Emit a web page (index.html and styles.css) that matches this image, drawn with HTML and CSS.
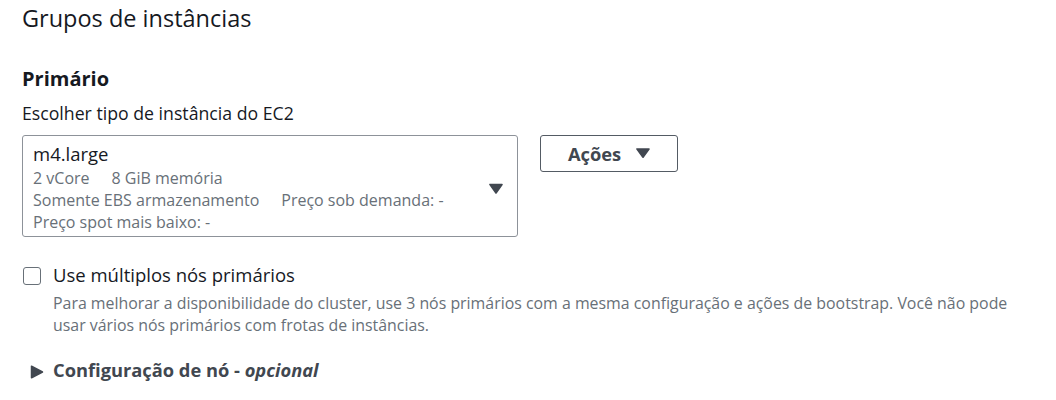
FILE: index.html
```html
<!DOCTYPE html>
<html lang="pt">
<head>
<meta charset="utf-8">
<link rel="stylesheet" href="styles.css">
</head>
<body>
<div class="page">
  <h2 class="title">Grupos de instâncias</h2>
  <h3 class="section">Primário</h3>
  <div class="field-label">Escolher tipo de instância do EC2</div>
  <div class="row">
    <div class="select">
      <div class="select-body">
        <div class="opt-name">m4.large</div>
        <div class="opt-line"><span>2 vCore</span><span>8 GiB memória</span></div>
        <div class="opt-line"><span>Somente EBS armazenamento</span><span>Preço sob demanda: -</span></div>
        <div class="opt-line"><span>Preço spot mais baixo: -</span></div>
      </div>
      <svg class="caret" width="14" height="11" viewBox="0 0 14 11"><path d="M1 1.5h12L7 10z" fill="#414750" stroke="#414750" stroke-width="1.6" stroke-linejoin="round"/></svg>
    </div>
    <button class="btn"><span>Ações</span><svg width="14" height="10" viewBox="0 0 14 10"><path d="M1 1h12L7 9.2z" fill="#414750" stroke="#414750" stroke-width="1.6" stroke-linejoin="round"/></svg></button>
  </div>
  <div class="check">
    <span class="box"></span>
    <div class="check-text">
      <div class="check-label">Use múltiplos nós primários</div>
      <div class="check-desc">Para melhorar a disponibilidade do cluster, use 3 nós primários com a mesma configuração e ações de bootstrap. Você não pode usar vários nós primários com frotas de instâncias.</div>
    </div>
  </div>
  <div class="expander">
    <svg class="exp-icon" width="14" height="14" viewBox="0 0 14 14"><path d="M1.5 1.2v11.6L12.5 7z" fill="#414750" stroke="#414750" stroke-width="1.5" stroke-linejoin="round"/></svg>
    <span class="exp-label">Configuração de nó - <i>opcional</i></span>
  </div>
</div>
</body>
</html>
```
FILE: styles.css
```css
* { box-sizing: border-box; }
body {
  margin: 0;
  background: #fff;
  font-family: "Open Sans", "Noto Sans", sans-serif;
  color: #16191f;
}
.page {
  padding: 0 22px;
  width: 1056px;
}
.title {
  margin: 0;
  padding-top: 2px;
  font-size: 23.5px;
  font-weight: 400;
  line-height: 32px;
}
.section {
  margin: 31px 0 0;
  font-size: 20px;
  font-weight: 700;
  line-height: 28px;
}
.field-label {
  margin-top: 8px;
  font-size: 17.7px;
  line-height: 24px;
}
.row {
  display: flex;
  align-items: flex-start;
  gap: 22px;
  margin-top: 10px;
}
.select {
  width: 496px;
  height: 102px;
  border: 1px solid #8d9299;
  border-radius: 3px;
  display: flex;
  align-items: center;
  padding: 4px 14px 0 10px;
}
.select-body {
  flex: 1;
  align-self: flex-start;
}
.opt-name {
  font-size: 18.5px;
  line-height: 27px;
}
.opt-line {
  font-size: 16px;
  line-height: 22px;
  color: #687078;
  display: flex;
  gap: 22px;
}
.caret { flex: none; margin-top: 1px; }
.btn {
  width: 138px;
  height: 37px;
  border: 1px solid #545b64;
  border-radius: 3px;
  background: #fff;
  font-family: inherit;
  font-size: 18.3px;
  font-weight: 700;
  color: #414750;
  display: flex;
  align-items: center;
  justify-content: center;
  gap: 15px;
  padding: 0 0 1px;
}
.check {
  display: flex;
  align-items: flex-start;
  gap: 12px;
  margin-top: 25px;
}
.box {
  width: 18.5px;
  height: 18.5px;
  border: 1px solid #687078;
  border-radius: 3px;
  margin: 4.5px 0 0 0.5px;
  flex: none;
}
.check-text {
  max-width: 975px;
}
.check-label {
  font-size: 18.5px;
  line-height: 26px;
}
.check-desc {
  margin-top: 4px;
  font-size: 15.9px;
  line-height: 22px;
  color: #687078;
}
.expander {
  display: flex;
  align-items: center;
  gap: 9px;
  margin-top: 21px;
  padding-left: 8px;
}
.exp-icon { flex: none; margin-top: 3px; }
.exp-label {
  font-size: 18.3px;
  line-height: 26px;
  font-weight: 700;
  color: #414750;
}
```
